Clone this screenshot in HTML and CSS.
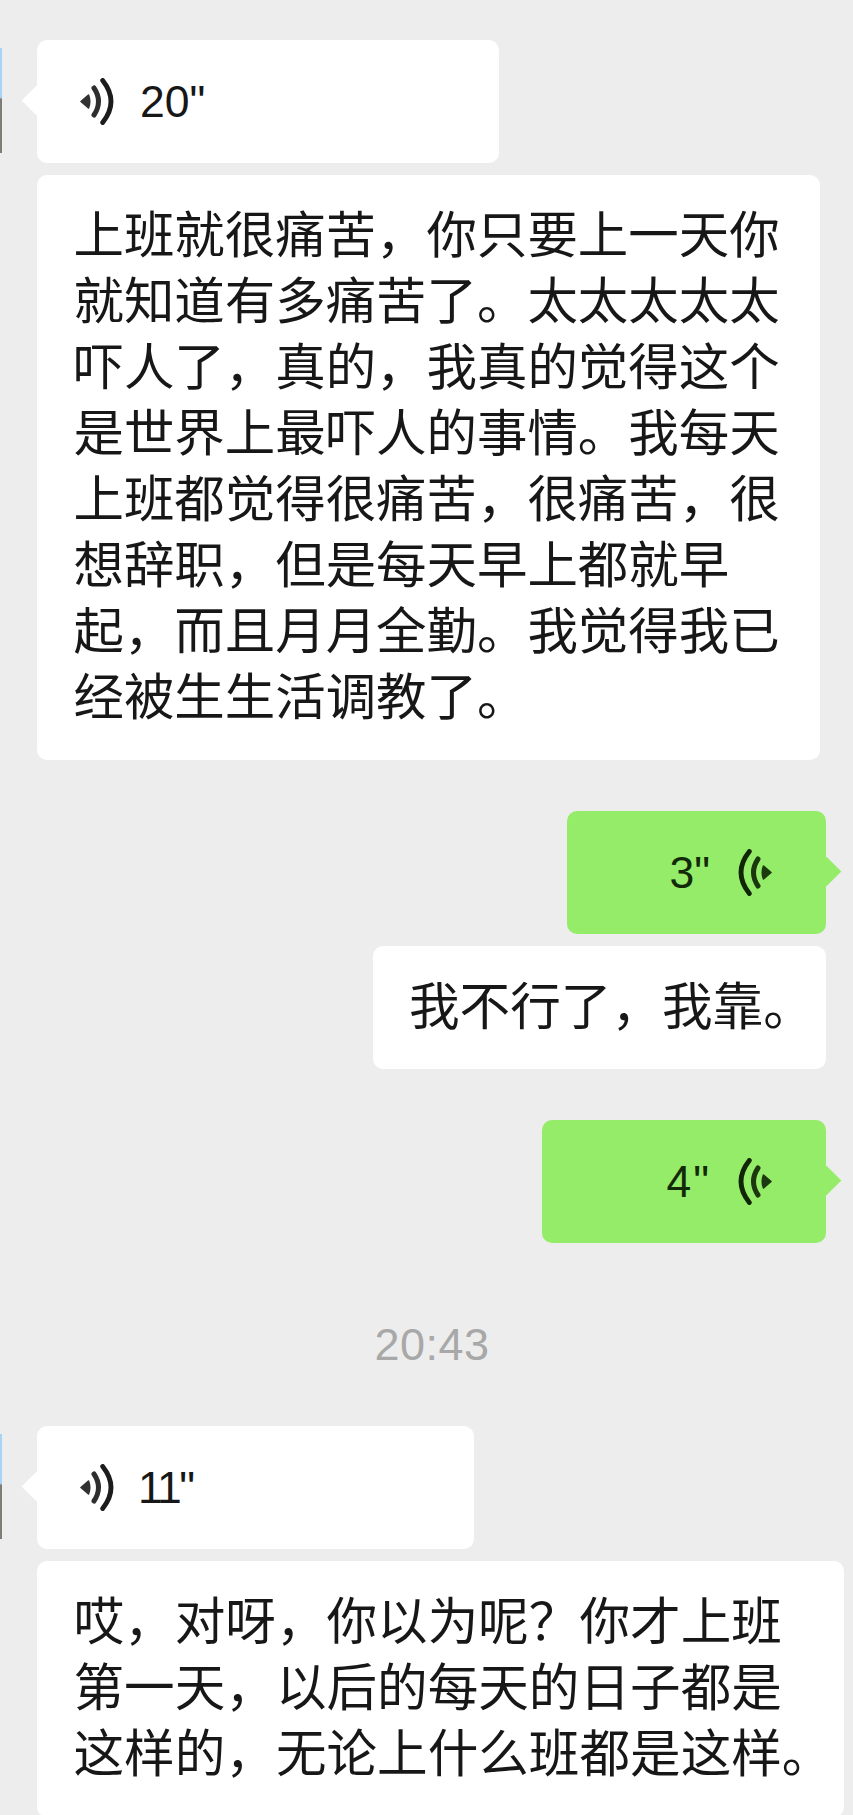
FILE: index.html
```html
<!DOCTYPE html>
<html lang="zh-CN">
<head>
  <meta charset="UTF-8">
  <title>聊天记录</title>
  <link rel="stylesheet" href="styles.css">
</head>
<body>
  <svg class="defs" width="0" height="0">
    <symbol id="voice" viewBox="0 0 34 47">
      <path d="M1 23.5 L8.5 17 Q11 23.5 8.5 30 Z" fill="currentColor" stroke="currentColor" stroke-width="1.6" stroke-linejoin="round" opacity=".9"/>
      <path d="M14 10 Q23 23.5 14 37" fill="none" stroke="currentColor" stroke-width="5" stroke-linecap="round" opacity=".92"/>
      <path d="M22.7 2.5 Q39.3 23.5 22.7 44.5" fill="none" stroke="currentColor" stroke-width="4.8" stroke-linecap="round"/>
    </symbol>
  </svg>

  <main class="chat">
    <div class="row first">
      <span class="avatar"></span>
      <div class="bubble voice left" style="width: 462px">
        <svg class="wave"><use href="#voice"/></svg>
        <span class="secs">20"</span>
      </div>
    </div>
    <div class="row">
      <div class="bubble text tall">上班就很痛苦，你只要上一天你<br>就知道有多痛苦了。太太太太太<br>吓人了，真的，我真的觉得这个<br>是世界上最吓人的事情。我每天<br>上班都觉得很痛苦，很痛苦，很<br>想辞职，但是每天早上都就早<br>起，而且月月全勤。我觉得我已<br>经被生生活调教了。</div>
    </div>

    <div class="row mine gap-big">
      <div class="bubble voice right green" style="width: 259px">
        <span class="secs">3"</span>
        <svg class="wave flip"><use href="#voice"/></svg>
      </div>
    </div>
    <div class="row mine">
      <div class="bubble text short">我不行了，我靠。</div>
    </div>
    <div class="row mine gap-big">
      <div class="bubble voice right green" style="width: 284px">
        <span class="secs wide">4"</span>
        <svg class="wave flip"><use href="#voice"/></svg>
      </div>
    </div>

    <div class="time">20:43</div>

    <div class="row">
      <span class="avatar"></span>
      <div class="bubble voice left" style="width: 437px">
        <svg class="wave"><use href="#voice"/></svg>
        <span class="secs tight">11"</span>
      </div>
    </div>
    <div class="row">
      <div class="bubble text last">哎，对呀，你以为呢？你才上班<br>第一天，以后的每天的日子都是<br>这样的，无论上什么班都是这样。</div>
    </div>
  </main>
</body>
</html>
```

FILE: styles.css
```css
html, body {
  margin: 0;
  height: 1815px;
  overflow: hidden;
  background: #ededed;
}
body {
  font-family: "Liberation Sans", "Noto Sans CJK SC", sans-serif;
  color: #171717;
}
.defs {
  display: block;
}
.chat {
  display: flex;
  flex-direction: column;
  padding: 40px 0 0 37px;
}
.row {
  position: relative;
  display: flex;
  margin-top: 12px;
}
.row.first {
  margin-top: 0;
}
.row.mine {
  justify-content: flex-end;
  padding-right: 27px;
}
.row.gap-big {
  margin-top: 51px;
}
.avatar {
  position: absolute;
  left: -37px;
  top: 8px;
  width: 2px;
  height: 105px;
  background: linear-gradient(#a9d3f2 0 47%, #7f7b75 49% 100%);
}
.bubble {
  position: relative;
  box-sizing: border-box;
  background: #fff;
  border-radius: 10px;
}
.voice {
  display: flex;
  align-items: center;
  height: 123px;
  font-size: 44.5px;
}
.voice::after {
  content: "";
  position: absolute;
  top: 50%;
  width: 21px;
  height: 21px;
  margin-top: -12px;
  background: inherit;
  transform: rotate(45deg);
}
.voice.left {
  padding-left: 43px;
}
.voice.left::after {
  left: -11px;
}
.voice.right {
  justify-content: flex-end;
  padding-right: 54px;
}
.voice.right::after {
  right: -11px;
}
.green {
  background: #95ec69;
  color: #122a08;
}
.wave {
  width: 34px;
  height: 47px;
  flex: none;
  color: #1c1c1c;
}
.wave.flip {
  transform: scaleX(-1);
  color: #112607;
}
.secs {
  margin-left: 26px;
}
.secs.tight {
  margin-left: 24px;
  letter-spacing: -2.5px;
}
.voice.right .secs {
  margin-left: 0;
  margin-right: 28px;
}
.voice.right .secs.wide {
  margin-right: 27px;
  letter-spacing: 2px;
}
.text {
  font-size: 50.6px;
  line-height: 66px;
  white-space: nowrap;
}
.tall {
  width: 783px;
  padding: 28px 36.5px 29px;
  font-size: 50.45px;
}
.short {
  width: 453px;
  height: 123px;
  padding: 29px 36px;
}
.last {
  width: 807px;
  padding: 29px 36.5px 29px;
}
.time {
  margin: 78px 26px 0 0;
  height: 93px;
  font-size: 45px;
  line-height: 48px;
  letter-spacing: .5px;
  text-align: center;
  color: #a8a8a8;
}
```
